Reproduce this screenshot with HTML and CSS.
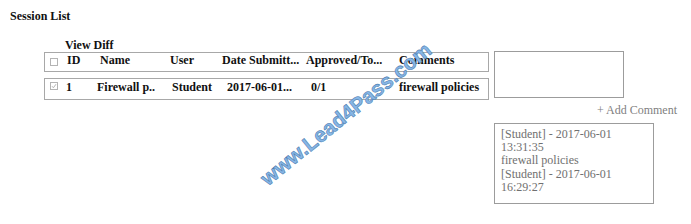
FILE: index.html
```html
<!DOCTYPE html>
<html>
<head>
<meta charset="utf-8">
<link rel="stylesheet" href="styles.css">
</head>
<body>
<h1 class="title">Session List</h1>
<div class="main">
  <div class="left">
    <div class="viewdiff">View Diff</div>
    <div class="box head">
      <span class="c0"><span class="cb"></span></span>
      <span class="h1">ID</span>
      <span class="h2">Name</span>
      <span class="h3">User</span>
      <span class="h4">Date Submitt...</span>
      <span class="h5">Approved/To...</span>
      <span class="h6">Comments</span>
    </div>
    <div class="box row">
      <span class="r0"><svg class="cbx" width="8" height="8" viewBox="0 0 8 8"><rect x="0.5" y="0.5" width="7" height="7" fill="#fff" stroke="#b4b4b4"/><path d="M2 4.2 L3.4 5.8 L6 2.2" fill="none" stroke="#b4b4b4" stroke-width="1"/></svg></span>
      <span class="r1">1</span>
      <span class="r2">Firewall p..</span>
      <span class="r3">Student</span>
      <span class="r4">2017-06-01...</span>
      <span class="r5">0/1</span>
      <span class="r6">firewall policies</span>
    </div>
  </div>
  <div class="right">
    <div class="textarea"></div>
    <div class="add">+ Add Comment</div>
    <div class="comments">
      <div>[Student] - 2017-06-01</div>
      <div>13:31:35</div>
      <div>firewall policies</div>
      <div>[Student] - 2017-06-01</div>
      <div>16:29:27</div>
    </div>
  </div>
</div>
<span class="watermark">www.Lead4Pass.com</span>
</body>
</html>
```

FILE: styles.css
```css
html, body {
  margin: 0;
  padding: 0;
  background: #fff;
}
body {
  position: relative;
  width: 691px;
  height: 224px;
  overflow: hidden;
  font-family: "Liberation Serif", "Times New Roman", serif;
  color: #111;
}
.title {
  margin: 0;
  padding: 9px 0 0 10px;
  font-size: 12px;
  line-height: 14px;
  font-weight: bold;
}
.main {
  display: flex;
  align-items: flex-start;
  margin-top: 16px;
  padding-left: 44px;
}
.left {
  width: 445px;
  display: flex;
  flex-direction: column;
}
.viewdiff {
  font-size: 12px;
  line-height: 12px;
  font-weight: bold;
  padding-left: 21px;
  height: 13px;
}
.box {
  box-sizing: border-box;
  border: 1px solid #a8a8a8;
  display: flex;
  align-items: flex-start;
  font-size: 12px;
  line-height: 14px;
  font-weight: bold;
  white-space: nowrap;
}
.head {
  height: 20px;
}
.row {
  height: 22px;
  margin-top: 6px;
  padding-top: 1px;
}
.c0 { width: 22px; flex: none; display: flex; padding-left: 5px; box-sizing: border-box; }
.cb {
  display: block;
  width: 8px;
  height: 8px;
  box-sizing: border-box;
  border: 1px solid #b4b4b4;
  margin-top: 5px;
}
.h1 { width: 33px; flex: none; }
.h2 { width: 70px; flex: none; }
.h3 { width: 52px; flex: none; }
.h4 { width: 84px; flex: none; }
.h5 { width: 93px; flex: none; }
.h6 { flex: none; }
.r0 { width: 21px; flex: none; display: flex; padding-left: 5px; box-sizing: border-box; }
.cbx { display: block; margin-top: 2px; }
.r1 { width: 31px; flex: none; }
.r2 { width: 75px; flex: none; }
.r3 { width: 55px; flex: none; }
.r4 { width: 84px; flex: none; }
.r5 { width: 88px; flex: none; }
.r6 { flex: none; }
.right {
  margin-left: 5px;
  margin-top: 12px;
  width: 183px;
  display: flex;
  flex-direction: column;
  align-items: flex-start;
}
.textarea {
  box-sizing: border-box;
  width: 130px;
  height: 47px;
  border: 1px solid #9c9c9c;
}
.add {
  align-self: stretch;
  text-align: right;
  margin-top: 5px;
  font-size: 12px;
  line-height: 14px;
  color: #808080;
}
.comments {
  box-sizing: border-box;
  margin-top: 6px;
  width: 160px;
  height: 81px;
  border: 1px solid #9c9c9c;
  padding: 4px 0 0 6px;
  font-size: 12px;
  line-height: 13.2px;
  color: #707070;
}
.watermark {
  position: absolute;
  left: 346px;
  top: 114px;
  transform: translate(-50%, -50%) rotate(-39deg);
  font-family: "Liberation Sans", Arial, sans-serif;
  font-weight: bold;
  font-size: 21px;
  line-height: 24px;
  white-space: nowrap;
  color: #86b6e6;
  -webkit-text-stroke: 0.6px #4f7fb2;
}
```
